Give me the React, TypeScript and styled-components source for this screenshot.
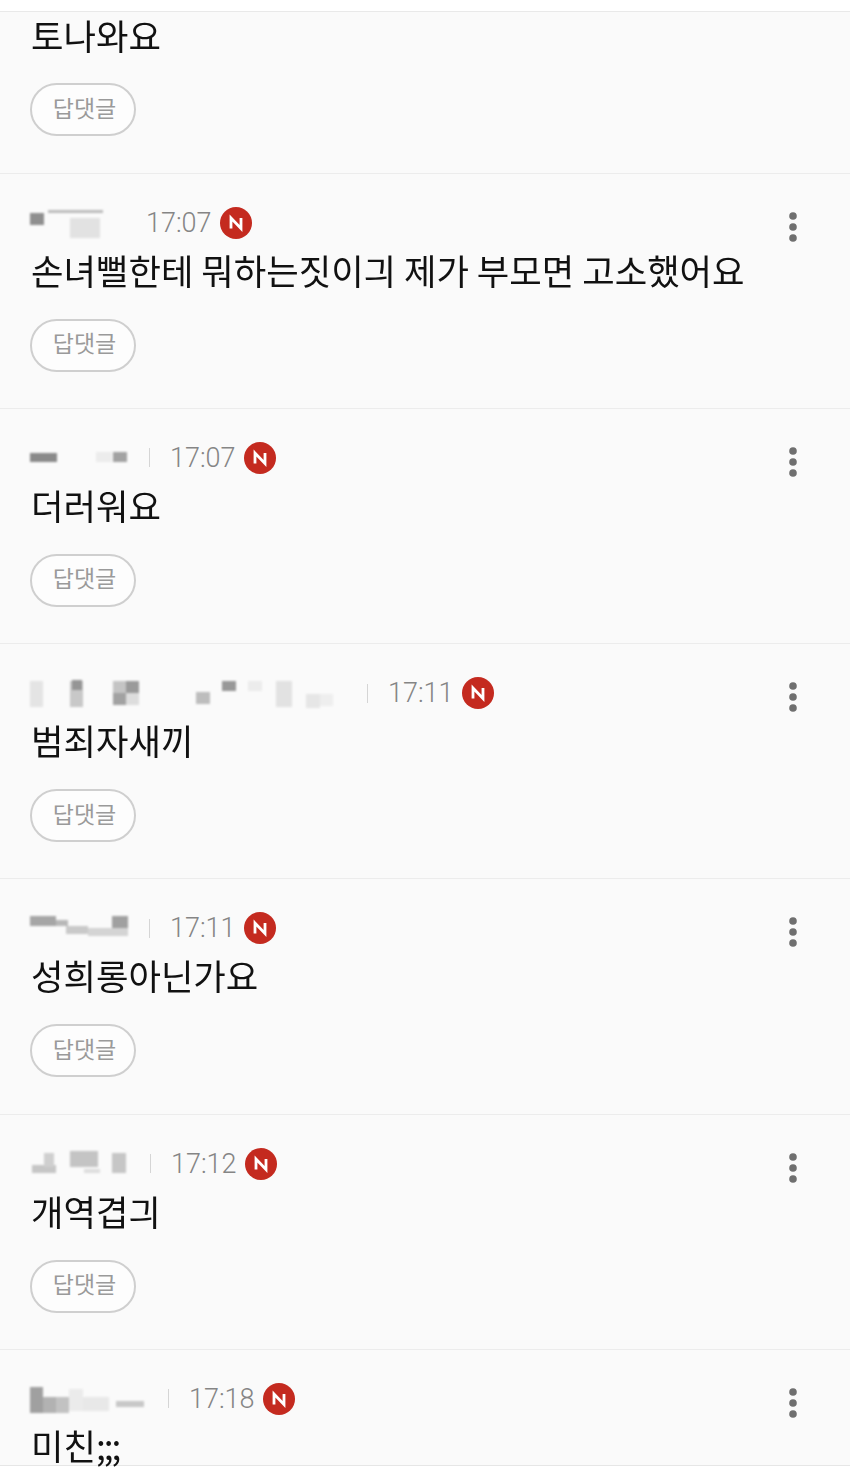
import React from 'react';
import styled, { createGlobalStyle } from 'styled-components';

type Block = [number, number, number, number, string];

interface CommentData {
  text: string;
  time: string;
  nameWidth: number;
  blocks: Block[];
  showDivider?: boolean;
}

const comments: CommentData[] = [
  {
    text: '손녀뻘한테 뭐하는짓이긔 제가 부모면 고소했어요',
    time: '17:07',
    nameWidth: 95,
    blocks: [
      [0, 5, 14, 12, '#8f8f8f'],
      [40, 10, 30, 20, '#e2e2e2'],
      [18, 2, 55, 3, '#bdbdbd'],
    ],
  },
  {
    text: '더러워요',
    time: '17:07',
    nameWidth: 119,
    showDivider: true,
    blocks: [
      [0, 10, 27, 9, '#8a8a8a'],
      [66, 9, 16, 10, '#ececec'],
      [83, 9, 14, 10, '#a2a2a2'],
    ],
  },
  {
    text: '범죄자새끼',
    time: '17:11',
    nameWidth: 337,
    showDivider: true,
    blocks: [
      [0, 3, 13, 26, '#e4e4e4'],
      [40, 3, 13, 26, '#c8c8c8'],
      [42, 2, 10, 10, '#959595'],
      [83, 3, 13, 12, '#c4c4c4'],
      [96, 3, 13, 12, '#9a9a9a'],
      [83, 15, 13, 12, '#a2a2a2'],
      [96, 15, 13, 12, '#dddddd'],
      [166, 14, 14, 12, '#bdbdbd'],
      [192, 3, 14, 10, '#989898'],
      [218, 3, 14, 10, '#ececec'],
      [246, 3, 16, 26, '#e2e2e2'],
      [276, 16, 14, 14, '#e6e6e6'],
      [290, 16, 13, 12, '#eeeeee'],
    ],
  },
  {
    text: '성희롱아닌가요',
    time: '17:11',
    nameWidth: 119,
    showDivider: true,
    blocks: [
      [0, 3, 26, 10, '#a6a6a6'],
      [26, 7, 12, 6, '#b8b8b8'],
      [36, 13, 22, 8, '#c9c9c9'],
      [82, 3, 16, 16, '#a0a0a0'],
      [58, 15, 40, 8, '#d4d4d4'],
    ],
  },
  {
    text: '개역겹긔',
    time: '17:12',
    nameWidth: 120,
    showDivider: true,
    blocks: [
      [2, 16, 24, 8, '#c6c6c6'],
      [14, 4, 10, 14, '#cfcfcf'],
      [40, 2, 28, 16, '#c4c4c4'],
      [82, 4, 14, 20, '#c6c6c6'],
      [54, 20, 16, 4, '#dddddd'],
    ],
  },
];

const lastBlocks: Block[] = [
  [0, 3, 13, 26, '#a0a0a0'],
  [13, 13, 13, 16, '#b2b2b2'],
  [26, 13, 13, 16, '#c2c2c2'],
  [39, 5, 14, 22, '#ebebeb'],
  [53, 13, 26, 14, '#e8e8e8'],
  [86, 17, 28, 6, '#c8c8c8'],
];

const GlobalStyle = createGlobalStyle`
  html, body {
    margin: 0;
    padding: 0;
    background: #fafafa;
  }
  body {
    height: 1469px;
    overflow: hidden;
    font-family: "Noto Sans CJK KR", "Noto Sans", sans-serif;
  }
`;

const Page = styled.div`
  width: 850px;
  height: 1469px;
  overflow: hidden;
  background: #fafafa;
`;

const TopStrip = styled.div`
  height: 11px;
  background: #ffffff;
`;

const FirstComment = styled.section`
  height: 161.8px;
  box-sizing: border-box;
  border-top: 1px solid #e9e9e9;
  padding: 0 30px;
`;

const CommentRow = styled.section`
  height: 235.2px;
  box-sizing: border-box;
  border-top: 1px solid #ececec;
  padding: 29px 30px 0;
`;

const LastRow = styled(CommentRow)`
  height: 117px;
  border-bottom: 1px solid #e6e6e6;
`;

const BottomStrip = styled.div`
  height: 3px;
  background: #ffffff;
`;

const MetaRow = styled.div`
  display: flex;
  align-items: center;
  height: 40px;
`;

const Name = styled.svg`
  flex: none;
  height: 30px;
  filter: blur(1.2px);
`;

const Divider = styled.span<{ $visible: boolean }>`
  flex: none;
  width: 1px;
  height: 19px;
  margin: 0 20px 0 0;
  background: ${(p) => (p.$visible ? '#d5d5d5' : 'transparent')};
`;

const Time = styled.span`
  font-family: Roboto, "Liberation Sans", sans-serif;
  font-size: 27px;
  font-weight: 300;
  color: #858585;
  line-height: 40px;
`;

const NewBadge = styled.svg`
  flex: none;
  width: 32px;
  height: 32px;
  margin-left: 8px;
`;

const MoreButton = styled.svg`
  flex: none;
  width: 12px;
  height: 34px;
  margin-left: auto;
  margin-right: 21px;
  margin-top: 10px;
  filter: blur(0.5px);
`;

const Body = styled.p`
  margin: -1px 0 0;
  padding-left: 1px;
  font-size: 35.3px;
  line-height: 56px;
  font-weight: 400;
  color: #111111;
  white-space: nowrap;
  filter: blur(0.3px);
`;

const FirstBody = styled(Body)`
  margin-top: -5px;
`;

const LastBody = styled(Body)`
  margin-top: 5px;
  line-height: 42px;
`;

const Semis = styled.span`
  letter-spacing: -2px;
`;

const ReplyButton = styled.button`
  display: flex;
  align-items: center;
  justify-content: center;
  width: 106px;
  height: 53px;
  margin-top: 21px;
  padding: 0 0 6px 3px;
  border: 2px solid #cfcfcf;
  border-radius: 27px;
  background: #fdfdfd;
  box-sizing: border-box;
  font-family: inherit;
  font-size: 23px;
  font-weight: 400;
  color: #9a9a9a;
`;

const FirstReply = styled(ReplyButton)`
  margin-top: 20px;
`;

const Meta: React.FC<Pick<CommentData, 'time' | 'nameWidth' | 'blocks' | 'showDivider'>> = ({
  time,
  nameWidth,
  blocks,
  showDivider,
}) => (
  <MetaRow>
    <Name width={nameWidth} viewBox={`0 0 ${nameWidth} 30`}>
      {blocks.map(([x, y, w, h, fill], i) => (
        <rect key={i} x={x} y={y} width={w} height={h} fill={fill} />
      ))}
    </Name>
    <Divider $visible={!!showDivider} />
    <Time>{time}</Time>
    <NewBadge viewBox="0 0 32 32">
      <circle cx="16" cy="16" r="16" fill="#c42a1f" />
      <path d="M11 21.5V11L21 21.5V11" fill="none" stroke="#ffffff" strokeWidth="2.8" />
    </NewBadge>
    <MoreButton viewBox="0 0 12 34">
      <circle cx="6" cy="5" r="3.8" fill="#6f6f6f" />
      <circle cx="6" cy="16" r="3.8" fill="#6f6f6f" />
      <circle cx="6" cy="27" r="3.8" fill="#6f6f6f" />
    </MoreButton>
  </MetaRow>
);

const App: React.FC = () => (
  <Page>
    <GlobalStyle />
    <TopStrip />
    <FirstComment>
      <FirstBody>토나와요</FirstBody>
      <FirstReply>답댓글</FirstReply>
    </FirstComment>
    {comments.map((c) => (
      <CommentRow key={c.text}>
        <Meta {...c} />
        <Body>{c.text}</Body>
        <ReplyButton>답댓글</ReplyButton>
      </CommentRow>
    ))}
    <LastRow>
      <Meta time="17:18" nameWidth={138} blocks={lastBlocks} showDivider />
      <LastBody>
        미친<Semis>;;;</Semis>
      </LastBody>
    </LastRow>
    <BottomStrip />
  </Page>
);

export default App;
